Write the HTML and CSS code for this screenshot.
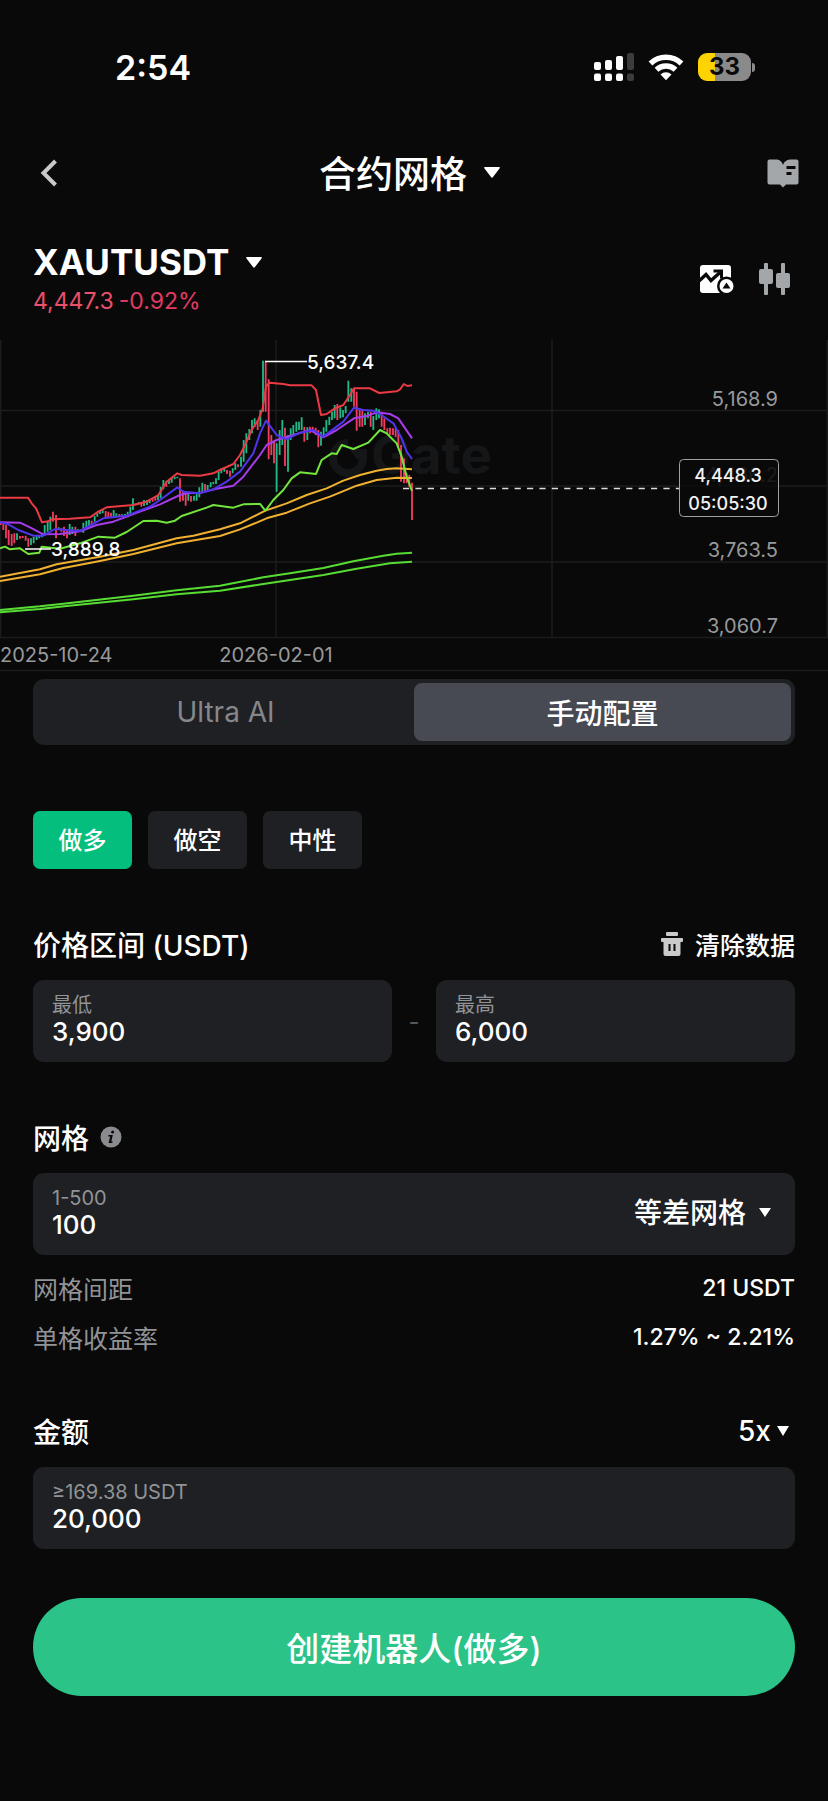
FILE: index.html
```html
<!DOCTYPE html>
<html lang="zh-CN">
<head>
<meta charset="utf-8">
<meta name="viewport" content="width=device-width, initial-scale=1">
<title>合约网格</title>
<link rel="stylesheet" href="styles.css">
</head>
<body>
<div class="status">
  <span class="status-time">2:54</span>
  <div class="status-icons">
    <svg width="40" height="28" viewBox="0 0 40 28" aria-hidden="true">
      <g fill="#fff"><rect x="0" y="9" width="7" height="8" rx="2"/><rect x="11" y="7" width="7" height="10" rx="2"/><rect x="22" y="3" width="7" height="14" rx="2"/><rect x="0" y="20.500" width="7" height="7.500" rx="2"/><rect x="11" y="20.500" width="7" height="7.500" rx="2"/><rect x="22" y="20.500" width="7" height="7.500" rx="2"/></g>
      <g fill="#3c3c3c"><rect x="33" y="0" width="7" height="17" rx="2"/><rect x="33" y="20.500" width="7" height="7.500" rx="2"/></g>
    </svg>
    <svg width="36" height="28" viewBox="0 0 36 28" aria-hidden="true">
      <g fill="none" stroke="#fff" stroke-width="5.500"><path d="M2.500 10.500A22.500 22.500 0 0 1 33.500 10.500"/><path d="M8.500 16.800A14 14 0 0 1 27.500 16.800"/></g>
      <path d="M12.500 21.500A8 8 0 0 1 23.500 21.500L18 27.300Z" fill="#fff"/>
    </svg>
    <div class="battery"><span class="battery-cell">33</span><span class="battery-tip"></span></div>
  </div>
</div>

<header class="topbar">
  <button class="icon-btn" aria-label="返回"><svg width="18" height="28" viewBox="0 0 18 28"><path d="M15.500 2L3.500 14L15.500 26" fill="none" stroke="#c9c9c9" stroke-width="4"/></svg></button>
  <button class="title">合约网格<svg class="tri" width="16" height="11" viewBox="0 0 16 11"><path d="M1 0H15Q16.500 0 15.500 1.500L9 10Q8 11.500 7 10L.5 1.500Q-.5 0 1 0Z"/></svg></button>
  <button class="icon-btn" aria-label="教程"><svg width="32" height="29" viewBox="0 0 32 29"><path d="M2.500.5H10Q14.500 1 16 6Q17.500 1 23 .5H29.500Q31.500.5 31.500 2.500V23.500Q31.500 25.500 29.500 25.500H19L16 28.500L13 25.500H2.500Q.5 25.500.5 23.500V2.500Q.5.500 2.500.5Z" fill="#a4a7aa"/><path d="M19.500 8.500H28.500M19.500 14.500H24.500" stroke="#090909" stroke-width="3"/></svg></button>
</header>

<main>
<section class="symbol">
  <div>
    <button class="symbol-name">XAUTUSDT<svg class="tri" width="16" height="11" viewBox="0 0 16 11"><path d="M1 0H15Q16.500 0 15.500 1.500L9 10Q8 11.500 7 10L.5 1.500Q-.5 0 1 0Z"/></svg></button>
    <p class="quote"><span class="quote-price">4,447.3</span><span class="quote-change">-0.92%</span></p>
  </div>
  <div class="symbol-tools">
    <button class="icon-btn" aria-label="指标"><svg width="34" height="30" viewBox="0 0 34 30"><rect x="0" y="1" width="31" height="28" rx="3" fill="#fff"/><path d="M-1 17L6 10.500L11 16.500L20 8.500" fill="none" stroke="#090909" stroke-width="3.400"/><path d="M13.500 7H21.500V14.500" fill="none" stroke="#090909" stroke-width="3"/><circle cx="26.500" cy="22" r="9.500" fill="#090909"/><circle cx="26.500" cy="22" r="7" fill="#fff"/><path d="M26.500 18.500L30.500 24.500H22.500Z" fill="#090909"/></svg></button>
    <button class="icon-btn" aria-label="K线"><svg width="32" height="32" viewBox="0 0 32 32"><g fill="#a4a7aa"><rect x="5" y="0" width="4" height="32" rx="1"/><rect x="0" y="6" width="14" height="15" rx="2"/><rect x="22" y="0" width="4" height="32" rx="1"/><rect x="17" y="10" width="14" height="15" rx="2"/></g></svg></button>
  </div>
</section>

<svg class="chart" viewBox="0 340 828 332" role="img" aria-label="XAUTUSDT K线图">
  <g stroke="#1b1c1d" stroke-width="1.500"><path d="M0 410.500H828M0 486H828M0 562H828M0 637.500H828M0 670.500H828"/><path d="M.7 340V637M276 340V637M552 340V637M827.300 340V637"/></g>
  <g class="mark">
    <path d="M348 443A15 15 0 1 0 363 459" fill="none" stroke="#141618" stroke-width="8"/><path d="M349 449H367V459H357Z"/>
    <text x="371" y="474">Gate</text>
  </g>
  <g transform="translate(0 330) scale(.33333)" fill="none">
    <g stroke-width="5.500">
      <path stroke="#f23c60" d="M2 575V585M10 578V600M18 585V625M26 600V645M35 612V648M43 610V640M60 618V626M68 618V624M77 617V632M85 625V650M159 545V575M168 555V625M184 595V605M192 590V618M201 598V625M226 590V618M242 598V606M275 572V582M317 543V565M325 545V562M333 548V562M358 552V560M408 520V526M424 515V530M458 507V515M466 500V512M499 452V470M540 445V515M549 485V512M557 490V527M573 498V515M615 462V482M681 420V432M690 422V440M714 403V412M773 270V300M797 95V245M806 148V388M814 315V375M822 335V400M855 293V408M913 290V335M930 290V310M938 290V303M947 293V315M955 300V352M1012 222V270M1062 175V230M1070 185V302M1079 240V290M1087 240V290M1112 245V290M1145 245V290M1153 265V300M1162 295V312M1170 293V315M1179 295V315M1187 295V320M1195 300V350M1203 345V455M1212 385V460M1220 430V460M1228 435V470M1236 458V570"/>
      <path stroke="#20b988" d="M51 610V630M93 625V645M101 620V640M110 615V630M118 615V625M126 612V622M134 585V618M143 575V605M151 560V600M176 592V600M209 582V615M217 590V612M234 598V606M250 578V608M259 572V598M267 570V590M284 558V575M292 550V560M300 540V552M308 538V550M341 540V560M349 550V560M366 553V560M375 552V564M383 545V562M391 530V555M399 505V540M416 517V523M432 510V528M441 510V525M449 508V520M474 495V510M482 470V505M490 450V478M507 448V462M515 443V458M524 440V448M532 440V445M565 490V512M582 497V512M590 490V512M598 472V502M607 458V485M623 465V480M632 457V472M640 455V463M648 445V462M656 425V450M664 415V430M673 412V425M698 415V430M706 400V420M723 380V410M731 330V395M739 310V370M748 297V330M756 270V310M764 265V290M781 240V290M789 92V245M830 340V485M839 300V375M847 270V345M864 315V425M872 295V330M880 285V315M889 275V305M897 275V300M905 262V300M922 292V330M963 305V347M971 292V320M979 270V305M988 260V285M996 245V270M1004 225V265M1021 232V265M1029 240V262M1037 228V250M1045 152V215M1054 175V215M1095 250V285M1104 245V265M1120 258V300M1129 235V270M1137 238V265"/>
    </g>
    <g stroke-width="6" stroke-linejoin="round">
      <path stroke="#ea3a44" d="M0 503H84L95 520L108 535L126 577L145 574L155 568L210 566L270 562L295 545L320 532L400 525L440 515L475 495L500 455L532 430L545 435L600 437L640 430L660 420L700 402L720 375L735 345L755 300L775 270L788 235L798 170L808 158L850 162L870 166L935 166L948 180L963 255L980 252L1005 235L1030 225L1050 195L1062 175H1110L1138 189L1190 184L1200 178L1212 162L1222 168L1236 166"/>
      <path stroke="#a83bec" d="M0 577L60 578L90 592L130 613L180 612L240 604L290 585L340 575L420 545L480 523L540 495L560 490L600 488L650 476L700 467L730 440L780 375L800 345L830 330L870 318L930 300L970 322L1010 300L1062 265L1100 258L1130 247L1170 252L1195 265L1236 325"/>
      <path stroke="#4f35ec" d="M0 577L25 583L55 600L100 617H130L165 597L200 600L240 603L310 565L380 557L450 530L480 510L532 472L550 485L600 490L640 478L680 455L720 425L760 370L780 310L798 272L830 315L860 328L900 308L940 300L970 320L990 305L1030 275L1062 233L1090 240L1120 242L1140 252L1180 280L1205 325L1220 365L1236 387"/>
      <path stroke="#f0b030" d="M0 740L60 729L120 718L170 703L300 680L400 660L475 640L530 625L580 617L660 598L720 580L760 560L796 542L860 520L920 495L980 475L1030 452L1080 435L1130 422L1160 417L1190 415L1236 418M0 753L120 733L190 714L300 693L400 672L530 640L660 618L720 598L770 578L805 563L860 548L930 520L990 500L1070 467L1130 450L1190 443L1236 444"/>
      <path stroke="#72e63c" d="M0 655L15 650L30 658L60 655L85 672L118 668L125 650L180 656L240 640L295 620L345 623L380 606L430 573L470 572L500 578L525 572L545 558L620 533L640 525L700 533L730 523L780 522L796 542L820 510L850 480L875 445L900 427L948 432L965 390L995 370L1010 372L1025 345L1060 357L1105 338L1140 300L1160 310L1190 340L1205 380L1220 440L1236 483"/>
      <path stroke="#56dc32" d="M0 840L120 829L190 821L400 797L530 781L660 767L790 742L870 730L970 714L1060 694L1150 677L1190 671L1236 668M0 847L120 837L200 828L400 808L530 793L660 782L790 762L870 750L970 735L1070 716L1170 700L1236 695"/>
    </g>
  </g>
  <path d="M265 361.500H307M25 549H51" stroke="#fff" stroke-width="1.500"/>
  <path d="M403 488.500H679" stroke="#dcdcdc" stroke-width="1.500" stroke-dasharray="6.200 6.200"/>
  <g class="note"><text x="307" y="369">5,637.4</text><text x="51" y="556">3,889.8</text></g>
  <g class="axis"><text x="778" y="406" text-anchor="end">5,168.9</text><text class="axis-faint" x="778" y="482" text-anchor="end">4,466.2</text><text x="778" y="557" text-anchor="end">3,763.5</text><text x="778" y="633" text-anchor="end">3,060.7</text><text x="0" y="662">2025-10-24</text><text x="276" y="662" text-anchor="middle">2026-02-01</text></g>
  <rect x="679.500" y="459.500" width="99" height="57" rx="4" fill="#090909" fill-opacity=".75" stroke="#a0a0a0"/>
  <g class="tag"><text x="728" y="482" text-anchor="middle">4,448.3</text><text x="728" y="510" text-anchor="middle">05:05:30</text></g>
</svg>

<form class="form">
  <div class="tabs" role="tablist">
    <button type="button" class="tab" role="tab" aria-selected="false">Ultra AI</button>
    <button type="button" class="tab tab-active" role="tab" aria-selected="true">手动配置</button>
  </div>

  <div class="chips">
    <button type="button" class="chip chip-active" aria-pressed="true">做多</button>
    <button type="button" class="chip" aria-pressed="false">做空</button>
    <button type="button" class="chip" aria-pressed="false">中性</button>
  </div>

  <div class="head">
    <h2>价格区间 (USDT)</h2>
    <button type="button" class="clear"><svg width="22" height="24" viewBox="0 0 22 24"><g fill="#c9cacc"><rect x="5" y="0" width="12" height="4" rx="1"/><rect x="0" y="6" width="22" height="4" rx="1"/><path d="M2.500 9H19.500V22Q19.500 24 17.500 24H4.500Q2.500 24 2.500 22Z"/></g><path d="M8.500 12V19M13.500 12V19" stroke="#090909" stroke-width="2"/></svg>清除数据</button>
  </div>
  <div class="range">
    <div class="field"><div class="field-main"><label for="low">最低</label><input id="low" value="3,900" inputmode="decimal"></div></div>
    <span class="range-dash">-</span>
    <div class="field"><div class="field-main"><label for="high">最高</label><input id="high" value="6,000" inputmode="decimal"></div></div>
  </div>

  <div class="head">
    <h2>网格<svg width="22" height="22" viewBox="0 0 22 22" aria-hidden="true"><circle cx="11" cy="11" r="10.500" fill="#8a8b8f"/><g fill="#090909"><circle cx="12.600" cy="6" r="1.500"/><path d="M8.500 9H12.800L11.300 15.500H12.700L12.300 17H8.600L10.200 10.400H8.300Z"/></g></svg></h2>
  </div>
  <div class="field">
    <div class="field-main"><label for="grids">1-500</label><input id="grids" value="100" inputmode="numeric"></div>
    <div class="drop"><select aria-label="网格模式"><option>等差网格</option></select><svg class="tri" width="12" height="9" viewBox="0 0 12 9"><path d="M0 0H12L6 9Z"/></svg></div>
  </div>
  <dl class="facts">
    <div><dt>网格间距</dt><dd>21 USDT</dd></div>
    <div><dt>单格收益率</dt><dd>1.27% ~ 2.21%</dd></div>
  </dl>

  <div class="head head-amount">
    <h2>金额</h2>
    <div class="drop drop-lever"><select aria-label="杠杆"><option>5x</option></select><svg class="tri" width="12" height="10" viewBox="0 0 12 10"><path d="M0 0H12L6 10Z"/></svg></div>
  </div>
  <div class="field">
    <div class="field-main"><label for="amount">≥169.38 USDT</label><input id="amount" value="20,000" inputmode="decimal"></div>
  </div>
  <button type="submit" class="submit">创建机器人(做多)</button>
</form>
</main>
</body>
</html>
```
FILE: styles.css
```css
* { box-sizing: border-box; }
body {
  margin: 0;
  padding-bottom: 103px;
  background: #090909;
  color: #fff;
  font-family: Inter, "Noto Sans CJK SC", sans-serif;
  font-size: 24px;
}
button, input, select {
  margin: 0;
  padding: 0;
  border: 0;
  background: none;
  color: inherit;
  font: inherit;
}
button { cursor: pointer; }
h2, p, dl, dd { margin: 0; }
svg { display: block; flex: none; }
.tri { fill: #fff; }

.status {
  display: flex;
  justify-content: space-between;
  align-items: center;
  height: 54px;
  margin-top: 40px;
  padding: 0 73px 0 115px;
}
.status-time { font-size: 34px; font-weight: 600; }
.status-icons { display: flex; align-items: center; gap: 14px; }
.battery { display: flex; align-items: center; gap: 1px; }
.battery-cell {
  width: 53px;
  height: 28px;
  border-radius: 9px;
  background: linear-gradient(90deg, #fdd302 33%, #8a8a8a 33%);
  color: #090909;
  font-size: 24px;
  font-weight: 700;
  line-height: 28px;
  text-align: center;
}
.battery-tip { width: 3px; height: 9px; border-radius: 0 4px 4px 0; background: #8a8a8a; }

.topbar {
  display: flex;
  justify-content: space-between;
  align-items: center;
  height: 60px;
  margin-top: 49px;
  padding: 0 29px 0 40px;
}
.icon-btn { display: flex; }
.title { display: flex; align-items: center; gap: 17px; padding: 0 6px 2px 0; font-size: 37px; font-weight: 500; }

.symbol {
  display: flex;
  justify-content: space-between;
  align-items: center;
  margin-top: 37px;
  padding: 0 37px 0 33px;
}
.symbol-name { display: flex; align-items: center; gap: 17px; font-size: 35px; font-weight: 700; line-height: 44px; }
.quote { display: flex; gap: 5px; font-size: 23px; line-height: 34px; }
.quote-price { color: #ea5069; }
.quote-change { color: #e23a62; }
.symbol-tools { display: flex; align-items: center; gap: 25px; }

.chart {
  width: 100%;
  height: auto;
  margin-top: 22px;
  font-size: 20px;
}
.mark { fill: #141618; font-size: 53px; font-weight: 700; }
.note { fill: #fff; font-size: 19px; font-weight: 500; }
.axis { fill: #98999b; }
.axis-faint { opacity: 0.5; }
.tag { fill: #f2f2f2; font-size: 18px; font-weight: 500; }

.form { padding: 0 33px; }
.tabs {
  display: grid;
  grid-template-columns: 1fr 1fr;
  margin-top: 7px;
  padding: 4px;
  border-radius: 11px;
  background: #1e2023;
}
.tab { height: 58px; border-radius: 8px; color: #85878b; font-size: 28px; }
.tab-active { background: #484a53; color: #fff; font-weight: 500; }

.chips { display: flex; gap: 16px; margin-top: 66px; }
.chip { width: 99px; height: 58px; padding-bottom: 3px; border-radius: 7px; background: #1f2024; font-weight: 500; }
.chip-active { background: #03be7c; }

.head {
  display: flex;
  justify-content: space-between;
  align-items: center;
  height: 40px;
  margin: 55px 0 16px;
}
.head h2 { display: flex; align-items: center; gap: 11px; font-size: 28px; font-weight: 500; }
.clear { display: flex; align-items: center; gap: 12px; font-size: 25px; font-weight: 500; }

.range { display: grid; grid-template-columns: 1fr 44px 1fr; align-items: center; }
.range-dash { color: #55575a; text-align: center; }
.field {
  display: flex;
  align-items: center;
  min-width: 0;
  height: 82px;
  padding: 0 24px 3px 19px;
  border-radius: 11px;
  background: #1e2023;
}
.field-main { display: flex; flex: 1; flex-direction: column; min-width: 0; }
.field label { color: #919397; font-size: 20px; line-height: 24px; }
.field input { width: 100%; height: 30px; outline: 0; font-size: 26px; font-weight: 500; line-height: 30px; }

.drop { display: grid; align-items: center; font-size: 28px; font-weight: 500; }
.drop select { grid-area: 1 / 1; padding-right: 24px; appearance: none; outline: 0; }
.drop .tri { grid-area: 1 / 1; justify-self: end; pointer-events: none; }
.drop-lever { padding-right: 6px; }
.drop-lever select { padding-right: 18px; }

.facts { margin-top: 8px; }
.facts div { display: flex; justify-content: space-between; align-items: center; height: 49px; }
.facts dt { color: #919397; font-size: 25px; }
.facts dd { font-size: 23px; font-weight: 500; }
.head-amount { margin-top: 50px; }

.submit {
  display: block;
  width: 100%;
  height: 98px;
  margin-top: 49px;
  border-radius: 49px;
  background: #2cc388;
  font-size: 33px;
  font-weight: 500;
}
```
